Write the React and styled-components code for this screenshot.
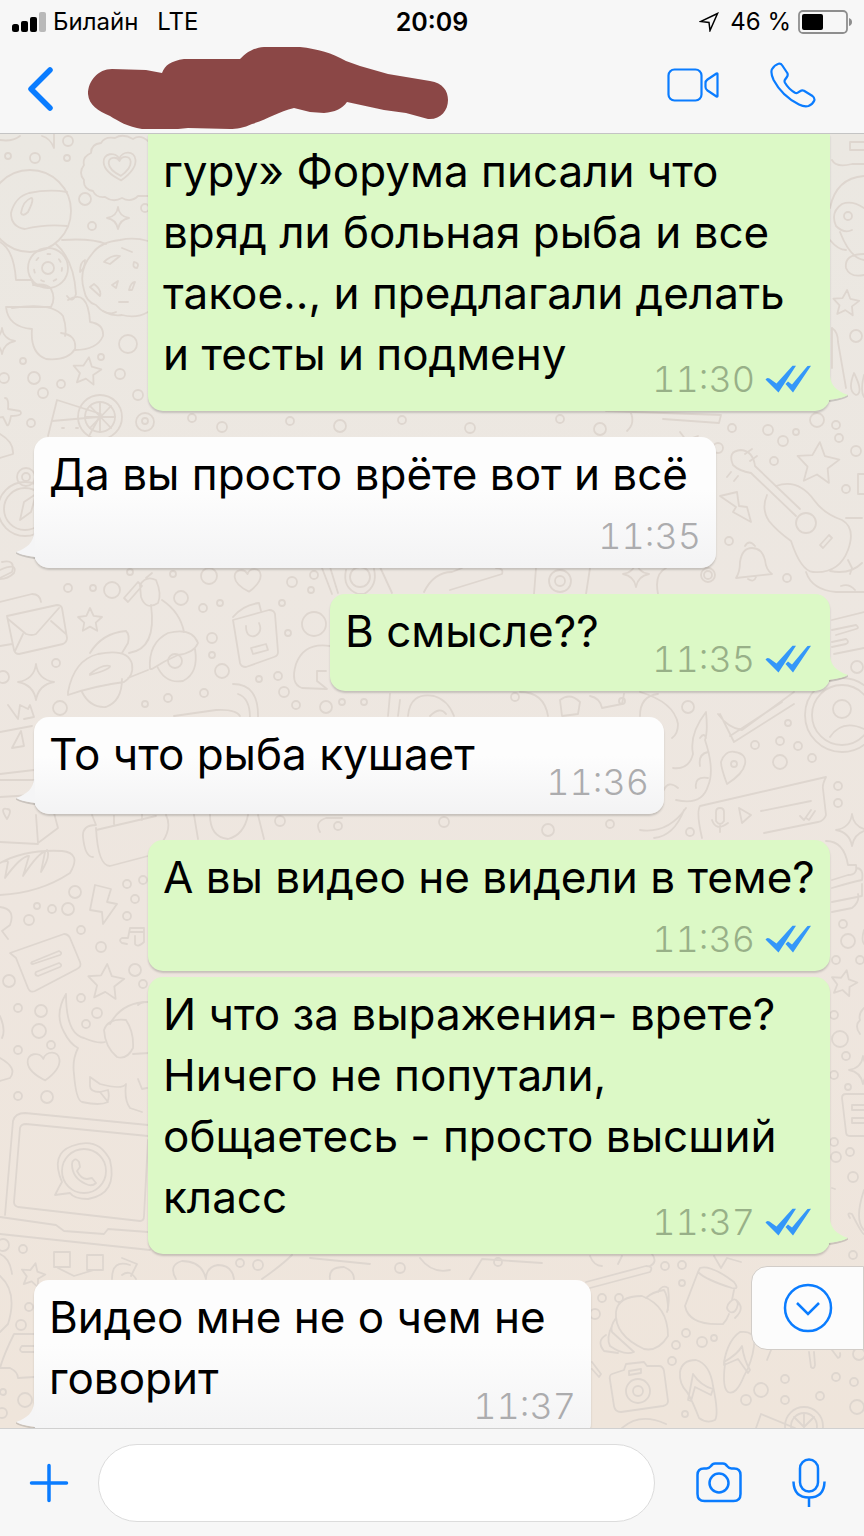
import React, { useState } from 'react';
import styled, { createGlobalStyle, css } from 'styled-components';

const GlobalStyle = createGlobalStyle`
    *, *::before, *::after {
        box-sizing: border-box;
    }

    body {
        margin: 0;
        color: #000;
        background: #f7f7f7;
        font-family: Inter, 'Noto Sans', sans-serif;
    }
`;

const blue = '#0a7cff';

const Screen = styled.div`
    display: flex;
    flex-direction: column;
    height: 100vh;
    overflow: hidden;
`;

const Header = styled.header`
    flex: none;
    background: #f7f7f7;
    border-bottom: 1px solid #c4c4c4;
`;

const StatusBar = styled.div`
    display: grid;
    grid-template-columns: 1fr auto 1fr;
    align-items: center;
    height: 44px;
    padding: 0 12px;
    font-size: 24px;
    line-height: 44px;
    white-space: nowrap;
`;

const StatusGroup = styled.div`
    display: flex;
    align-items: center;
    justify-content: ${({ $end }) => ($end ? 'flex-end' : 'flex-start')};
    gap: 7px;
`;

const Network = styled.span`
    margin-left: 12px;
`;

const LocationSvg = styled.svg`
    margin-right: 4px;
`;

const Clock = styled.time`
    font-size: 25px;
    font-weight: 600;
`;

const Nav = styled.nav`
    display: flex;
    align-items: center;
    height: 89px;
`;

const CallActions = styled.div`
    display: flex;
    padding: 0 21px 8px 0;
`;

const IconButton = styled.button`
    display: flex;
    flex: none;
    align-items: center;
    justify-content: center;
    width: ${({ $width }) => $width}px;
    height: 78px;
    padding: 0;
    color: ${blue};
    background: none;
    border: 0;
    cursor: pointer;

    svg {
        display: block;
        fill: none;
        stroke: currentColor;
        stroke-linecap: round;
        stroke-linejoin: round;
    }
`;

const Contact = styled.div`
    flex: 1;
    padding-left: 8px;

    svg {
        display: block;
    }
`;

const Chat = styled.main`
    position: relative;
    flex: 1;
    min-height: 0;
    overflow: hidden;
    background: linear-gradient(#ebe8e2, #ede7e1 35%, #eee6df 60%, #efe5db);
`;

const WallpaperSvg = styled.svg`
    position: absolute;
    inset: 0;
    width: 100%;
    height: 100%;
    fill: none;
    stroke: #ded6cf;
    stroke-width: 1.8;
    stroke-linecap: round;
    stroke-linejoin: round;
`;

const Messages = styled.ol`
    position: relative;
    display: flex;
    flex-direction: column;
    margin: 0;
    padding: 0 34px;
    list-style: none;
`;

const Bubble = styled.li`
    position: relative;
    flex: none;
    width: ${({ $width }) => $width}px;
    max-width: 100%;
    min-height: ${({ $tall }) => ($tall ? 158 : 97)}px;
    margin-top: ${({ $joined }) => ($joined ? 6 : 26)}px;
    padding: 7px 15px ${({ $stacked }) => ($stacked ? 63 : 26)}px;
    border-radius: 15px;
    box-shadow: 0 2px 2px rgba(0, 0, 0, 0.17);

    ${({ $out }) =>
        $out
            ? css`
                  align-self: flex-end;
                  background: #dcf9c6;
              `
            : css`
                  align-self: flex-start;
                  background: linear-gradient(#fdfdfd 40%, #f3f3f4);
              `}

    &:first-child {
        margin-top: 0;
        border-top-left-radius: 0;
        border-top-right-radius: 0;
    }
`;

const Text = styled.p`
    margin: 0;
    font-size: 44px;
    line-height: 61px;
`;

const Line = styled.span`
    display: block;
    width: fit-content;
`;

const Meta = styled.div`
    position: absolute;
    right: ${({ $out }) => ($out ? 19 : 15)}px;
    bottom: 10px;
    display: flex;
    align-items: center;
    gap: 10px;
    color: ${({ $out }) => ($out ? '#98b088' : '#acacae')};
    font-size: 36px;
    font-weight: 300;
    font-variant-numeric: tabular-nums;
    line-height: 44px;
`;

const TailSvg = styled.svg`
    position: absolute;
    bottom: 7px;
    ${({ $out }) =>
        $out
            ? css`
                  right: -18px;
                  fill: #dcf9c6;
              `
            : css`
                  left: -18px;
                  fill: #f5f5f6;
                  transform: scaleX(-1);
              `}
`;

const ScrollButton = styled.button`
    position: absolute;
    right: 0;
    bottom: 78px;
    display: flex;
    align-items: center;
    justify-content: center;
    width: 113px;
    height: 84px;
    padding: 0;
    color: ${blue};
    background: #fcfcfc;
    border: 1px solid #d2cdc8;
    border-radius: 16px 0 0 16px;
    cursor: pointer;
`;

const Composer = styled.form`
    display: flex;
    flex: none;
    align-items: center;
    padding: 15px 10px 14px 0;
    background: #f7f7f7;
    border-top: 1px solid #d0d0d0;
`;

const MessageInput = styled.input`
    flex: 1;
    min-width: 0;
    height: 78px;
    margin-right: 19px;
    padding: 0 32px;
    color: inherit;
    background: #fff;
    border: 1px solid #dcdcdc;
    border-radius: 39px;
    font: inherit;
    font-size: 36px;

    &:focus {
        outline: none;
    }
`;

const messages = [
    {
        out: true,
        tail: true,
        width: 682,
        time: '11:30',
        lines: [
            'гуру» Форума писали что',
            'вряд ли больная рыба и все',
            'такое.., и предлагали делать',
            'и тесты и подмену',
        ],
    },
    {
        tail: true,
        stacked: true,
        width: 682,
        time: '11:35',
        lines: ['Да вы просто врёте вот и всё'],
    },
    { out: true, tail: true, width: 500, time: '11:35', lines: ['В смысле??'] },
    { tail: true, width: 630, time: '11:36', lines: ['То что рыба кушает'] },
    {
        out: true,
        stacked: true,
        width: 682,
        time: '11:36',
        lines: ['А вы видео не видели в теме?'],
    },
    {
        out: true,
        tail: true,
        joined: true,
        width: 682,
        time: '11:37',
        lines: [
            'И что за выражения- врете?',
            'Ничего не попутали,',
            'общаетесь - просто высший',
            'класс',
        ],
    },
    {
        tail: true,
        tall: true,
        width: 557,
        time: '11:37',
        lines: ['Видео мне не о чем не', 'говорит'],
    },
];

// [cx, cy, r]
const dots = [
    [68, 141, 5], [35, 158, 5], [8, 156, 3], [67, 158, 3], [85, 199, 6], [92, 226, 4], [145, 208, 4],
    [128, 344, 9], [101, 357, 3], [23, 361, 3], [4, 378, 5], [34, 378, 6], [61, 384, 4], [43, 393, 5],
    [120, 374, 5], [138, 395, 5], [31, 423, 4], [145, 422, 9], [145, 421, 3],
    [192, 418, 4], [222, 427, 5], [290, 421, 4], [340, 426, 6], [402, 420, 4], [470, 428, 5],
    [560, 419, 4], [600, 429, 6], [732, 428, 4], [768, 430, 5], [783, 441, 5], [796, 432, 3], [817, 420, 7],
    [836, 425, 4], [839, 438, 4], [856, 451, 5], [774, 461, 4], [846, 489, 4], [718, 448, 5], [729, 541, 4],
    [787, 578, 4], [708, 575, 7], [708, 575, 4],
    [68, 588, 4], [93, 588, 3], [112, 590, 8], [130, 572, 3], [173, 574, 3], [209, 576, 8], [181, 598, 7],
    [203, 608, 4], [220, 603, 3], [282, 603, 3], [292, 582, 5], [311, 590, 3], [314, 575, 4], [212, 638, 5],
    [212, 655, 3], [222, 671, 7], [288, 633, 3], [259, 679, 3], [278, 676, 4], [284, 692, 5], [296, 705, 4],
    [326, 707, 6], [342, 702, 3], [364, 702, 3], [56, 663, 4], [3, 677, 6], [60, 708, 7], [145, 704, 3],
    [168, 698, 4], [204, 693, 4], [515, 697, 4], [622, 701, 3], [688, 707, 6], [560, 581, 11], [560, 581, 5],
    [788, 723, 3], [755, 745, 4], [780, 741, 4], [798, 746, 4], [780, 762, 7], [812, 758, 4],
    [838, 786, 4], [838, 803, 4], [857, 667, 6], [842, 709, 9],
    [280, 821, 5], [338, 826, 4], [444, 822, 5], [548, 830, 6], [610, 824, 4], [690, 832, 4],
    [75, 892, 6], [68, 909, 6], [52, 909, 4], [37, 906, 3], [29, 920, 5], [81, 930, 4], [101, 947, 5],
    [127, 884, 4], [143, 880, 4], [135, 899, 4], [127, 916, 4], [135, 970, 6], [143, 984, 4], [9, 981, 6],
    [18, 1008, 4], [41, 1011, 6], [39, 1031, 7], [51, 1045, 4], [18, 1050, 4], [81, 998, 4], [97, 1013, 5],
    [86, 1024, 4], [18, 1096, 4], [47, 1097, 6],
    [843, 924, 4], [848, 941, 7], [836, 960, 4], [860, 960, 4], [834, 1015, 4], [840, 1039, 8], [846, 1056, 4],
    [834, 1075, 4], [848, 1087, 3], [834, 1142, 4], [836, 1157, 5], [850, 1152, 4], [853, 1177, 5],
    [853, 1255, 4],
    [3, 1245, 6], [23, 1249, 4], [21, 1325, 5], [29, 1307, 4], [25, 1400, 7], [3, 1392, 3], [2, 1413, 5],
    [240, 1263, 4], [258, 1265, 5], [400, 1268, 5], [498, 1262, 4], [602, 1298, 4], [619, 1298, 4],
    [595, 1314, 5], [665, 1266, 4], [682, 1265, 4], [682, 1283, 3], [676, 1345, 4], [686, 1333, 4],
    [702, 1342, 5], [714, 1338, 3], [672, 1361, 4], [761, 1390, 7], [746, 1400, 5], [785, 1379, 4],
    [785, 1400, 4], [820, 1396, 4], [836, 1377, 4], [854, 1382, 4], [857, 1407, 7], [685, 1414, 3],
    [859, 1354, 6],
];

// [x, y, scale, rotation]
const stars = [
    [87, 371, 14, 8], [818, 463, 21, 5], [846, 303, 13, 5], [90, 620, 12, 0], [106, 982, 18, 4],
    [844, 983, 13, 12], [33, 1275, 12, 12],
];
const sparkles = [
    [118, 218, 11], [2, 341, 13], [36, 682, 18], [673, 634, 14], [636, 574, 13], [852, 830, 16], [863, 1070, 14],
];
const hearts = [
    [120, 166, 16], [120, 166, 11], [248, 580, 13], [44, 1066, 16],
];

function Wallpaper() {
    return (
        <WallpaperSvg
            viewBox="0 134 864 1294"
            preserveAspectRatio="xMidYMin slice"
            aria-hidden="true"
        >
            {dots.map(([cx, cy, r], i) => (
                <circle key={i} cx={cx} cy={cy} r={r} />
            ))}
            {stars.map(([x, y, s, r], i) => (
                <path
                    key={i}
                    vectorEffect="non-scaling-stroke"
                    transform={`translate(${x} ${y}) rotate(${r}) scale(${s})`}
                    d="M0-1L.3-.35L1-.25L.48.22L.6.9L0 .55L-.6.9L-.48.22L-1-.25L-.3-.35Z"
                />
            ))}
            {sparkles.map(([x, y, s], i) => (
                <path
                    key={i}
                    vectorEffect="non-scaling-stroke"
                    transform={`translate(${x} ${y}) scale(${s})`}
                    d="M0-1Q.1-.15 1 0Q.15.15 0 1Q-.15.15-1 0Q-.1-.15 0-1Z"
                />
            ))}
            {hearts.map(([x, y, s], i) => (
                <path
                    key={i}
                    vectorEffect="non-scaling-stroke"
                    transform={`translate(${x} ${y}) rotate(-5) scale(${s})`}
                    d="M0 .9C-.5.6-1 .2-1-.3C-1-.9-.2-.95 0-.45C.2-.95 1-.9 1-.3C1 .2.5.6 0 .9Z"
                />
            ))}

            {/* scalloped badge, biscuit */}
            <path d="M148 141q-8-7-15-2q-10-6-18-1q-10-2-14 5q-10 1-10 10q-9 4-7 12q-6 8 0 15q-1 9 9 11q3 7 12 6q8 6 17 1q9 5 16-2l10 0" />
            <path d="M148 241q-14-4-28-1q-20 2-28 14q-14 16-8 36q2 12 12 15q10 12 26 10q14 4 26-3" />
            <path d="M104 262q8-8 16-6l-10 8ZM90 287l10 9q2-6-6-12ZM112 285l6-4-2 7ZM134 262q6 1 3 6q-5 0-3-6ZM129 290q2-8 6-8l-3 8ZM119 302h9M122 248l10 4M80 272q0-10 5-12q0 8-5 12ZM103 311q8 4 13 1" />

            {/* astronaut */}
            <circle cx="30" cy="211" r="41" />
            <path d="M67 192q-18-3-38 1q-14 4-18 20q0 14 14 16q20-5 42-3M31 198q4 0-3 14q-5 5-7 1q2-12 10-15Z" />
            <path d="M62 240q30-2 44 4M56 244q18 16 20 50q-3 10-9 2M0 242q14 8 16 38h16q0 8 14 6M6 307h45q5-9 0-18q-4-6-18-4M6 307q2 20 26 22M12 308q40-6 51 8q4 12 2 20M32 329q-2 24 14 30q22 2 29-10q2-14-14-16M68 300q20-12 22 22q14 2 13 14q-6 14-28 14" />
            <circle cx="48" cy="268" r="20" />
            <circle cx="48" cy="268" r="6" />
            <circle cx="48" cy="268" r="14" strokeDasharray="3 10" />
            <path d="M0 140q12 2 20-4M42 136q8 2 12 12v-14" />

            {/* lemonade */}
            <path d="M48 436l9-36 44 14-12 22M52 421l46-4M62 428h2M76 428h2" />
            <circle cx="100" cy="417" r="22" />
            <circle cx="100" cy="417" r="15" />
            <path d="M100 402v30M85 417h30M90 406l21 22M111 406l-21 22" />

            {/* cross, compass */}
            <path d="M5 398q4 0 3 11l12 2q4 5-9 5q-2 11-4 9l-4-8-8 1" />
            <path d="M0 434q14 8 13 20l-13 4" />
            <circle cx="25" cy="509" r="27" />
            <circle cx="25" cy="509" r="21" />
            <circle cx="26" cy="477" r="9" />
            <circle cx="26" cy="477" r="4" />
            <path d="M20 520l4-18 12-8-5 18Z" />
            <path d="M0 570q18-8 14 3q-6 6-14 6" />

            {/* shapes behind the right edge */}
            <path d="M832 160q4 8 20 4h12M850 142h14M850 142v8h14M864 176q-28 2-34 32M864 208q-12-8-22-4q-12 8-6 22q8 8 16 4M840 232q10 26 24 28M830 240q8 10 16 10M864 254q-20 0-18 14q4 10 18 7" />
            <circle cx="848" cy="216" r="4" />
            <path d="M832 328q6 4 6 14l8 46M832 328v40M854 373q10 20 2 22q-9-4-2-22ZM864 375q-4 16 0 22M864 474h-6v20h6" />
            <path d="M606 411l115 4-2 8-56-4M630 411q6 12-3 20M680 432l6 8 12-4" />
            <circle cx="856" cy="336" r="6" />

            {/* bolt, bell */}
            <path d="M720 496l17-4 2 14 8 1 4 15-18-10 3-5Z" />
            <path d="M736 578q4-6 4-16q2-14 12-14q10 0 13 12q1 10 7 14ZM745 546q4-7 10 0M748 579q6 4 8-2" />

            {/* guitar */}
            <path d="M733 465q-6-14 8-15q12 1 14 16l45 43M733 465q6 6 18 8l45 43" />
            <path d="M767 495q-6 14 2 26q8 10 22 20q10 30 22 31q26 2 35-22q8-22-6-30q-18-6-28-20q-16-22-38-14" />
            <circle cx="806" cy="523" r="10" />
            <path d="M820 545l9-10 3 3-9 10ZM745 454l7-5M750 461l7-5M731 472l-4 5M738 476l-4 5M830 571q20 4 32-8M848 560l4 8-2 6M806 572q6 18 30 20h28M841 586q8-3 14 4M862 518h-16" />

            {/* envelope */}
            <path d="M7 616l50-11q4 0 5 3l5 30q0 4-4 6l-44 10q-4 0-5-4ZM8 619l18 15q6 2 10 0l23-26M15 651l8-17M66 634l-15-13M0 602l32-8q8 0 9 8M0 646l12-2M2 562q14-3 10 10l-12 6" />

            {/* scooter */}
            <path d="M124 598l14-16 4 4-14 16ZM140 585q6-10 16-5q6 14 2 23q-12 8-17-6ZM146 578l6-5M151 605q6 44-22 48M162 600q18 12 22 32M90 653q12-20 36-22q4 4 2 12l-6 10" />
            <path d="M68 692q6-32 30-38q30-6 34 10q2 12-8 18q-30 4-56 13ZM90 674q12-10 20-8q1 3-20 9ZM82 692q8 16 24 15q16-6 16-28M150 669q-2-26 18-36q24-6 30 10q-4 10-20 12q-14 6-26 14ZM157 666q8 18 26 15q16-8 12-32M128 678l20-8" />
            <circle cx="175" cy="661" r="7" />

            {/* passport */}
            <path d="M233 620l36-10q5 0 6 4l3 38q0 4-4 5l-28 10q-5 0-6-4ZM233 617q10-12 26-14l2 8M246 626q0 12 9 10q8-4 4-13M251 648l15-4 2 6-15 4Z" />

            {/* phone and crab behind bubbles */}
            <path d="M322 568l10 26M330 567l8 26M380 567l12 26M346 570q-4 18 12 24h6q14-8 10-25" />
            <circle cx="360" cy="577" r="10" />
            <path d="M424 592q10-20 28-20l10-4M450 590l52-16q2-6-6-6M536 568l-2 26M590 568l-4 26M658 594q-4-20 8-26" />
            <circle cx="314" cy="624" r="12" />
            <path d="M330 646q-26-4-34 18q-6 20 6 24l24 1M326 671h-9v10l10 8" />

            {/* tambourine, tag, ribbon */}
            <path d="M174 716l42-6q20-1 24 6M233 684q26 0 25 34M238 694q12 4 12 24M390 694l-2 22M400 700l-2 16M408 716q2-24 26-20q14 4 20 20M430 716q10-10 16-2M520 692q24 0 28 24M560 700q10-8 20 2l-2 12-16 2ZM590 696q10 2 12 12l20-4 2-10M640 716q0-20 18-22" />
            <path d="M640 692q34 10 38 32q0 10-6 14M718 714q10 14 24 16l52-38M720 714l14 28 60-38M730 736l52-34M673 768q16 2 20-14q-4-20 13-42q2 20-1 28q10 30 3 46q-6 20-32 14M708 752q-10 2-8 14M696 788q-2-12 12-10M664 790q4-10 14-2M700 738q4-6 6 0" />
            <path d="M727 784q-6-16-6-22q4-12 14-10q12 2 10 12q-2 10-18 20Z" />
            <circle cx="734" cy="764" r="3" />
            <circle cx="842" cy="715" r="37" />
            <circle cx="842" cy="715" r="30" />
            <path d="M830 737q12-18 34-8M832 620l32-8M832 630l24-5q4 3 0 4l-20 6M832 642l14-3q4 3 0 5l-14 3M834 654l30-6" />

            {/* voice message card */}
            <path d="M702 838q-6-26-2-32l126-29q-4 8-3 12l3 26q-2 6-8 7l-54 11M716 812q0-4 4-4q4 0 4 4v9q-4 6-8 0ZM712 820q4 12 16 3M720 826v6M739 808l12 7-9 8ZM761 811l50-10M800 816l4 4 7-10M806 818l3 2 6-9M640 830q28 4 46-22M654 838q20-2 30-28" />

            {/* paper plane, blinds, carton */}
            <path d="M8 705l10 14 2-14 8 4 2-4 4 12-10 2M0 732l32-6M12 748l9-17 3 15ZM0 774l34-4M0 780h34M0 797l34-2M0 842l38 2M36 815l2 28 20-15-4-15M7 819q-8-12 0-10q6 0 0 10Z" />
            <path d="M92 815l4 10q-14 0-13 12q2 20 10 20M96 828q2 38 14 38l38-10M96 830l60-14M114 824v-8M142 820v-6M166 815q6 12-3 26M194 815l4 24M210 815q0 22 18 24q16-4 20-24M258 815l6 24M320 832q-6-10 6-14h16" />

            {/* baguette */}
            <path d="M0 895q40-2 70-22q12-20-8-22q-36-2-62 12M2 862q6-2 6 0l-3 16q16-22 24-22l-6 20q16-24 22-24l-4 20q10-16 6-22" />
            <path d="M0 907q16 2 10 18l-8 6 6 8" />

            {/* bolt, note, speech card */}
            <path d="M95 885l16 4-4 13 10 2-14 20-1-12-12-2ZM127 944l-5-1q-4-3 0-5h6l2-10h14v14q-6 6-9 2v-8M130 932h14" />
            <path d="M10 953l54-19q4 0 6 4l10 24q2 5-3 7l-42 22q-5 2-7-3l-12-30ZM32 962l27-11q4 2 1 4l-27 9q-3 0-1-2ZM36 972l23-9q4 2 1 4l-22 9q-4-1-2-4Z" />

            {/* elephant */}
            <path d="M66 994q-12 20-2 38q6 12 14 16q-6 12-4 26q2 26 8 28q18 4 26 0l-8-10q-10 0-10-6v-9l10 7q22 6 26 0q-2 16 4 24l12 4M66 994q0 40 18 44q14 6 21 4M148 1002q-26 0-38 22M100 1092l8-2q2 8-1 12M138 1079l4 10 5-1" />
            <path d="M104 1030q4-12 22-10q8 12 7 28q-6 12-16 9q-12-10-13-27ZM133 1054l16-1M138 1005q4-4 12-3" />
            <path d="M0 1016q6 14 2 22M0 1058q18 10 10 20l-10 3" />

            {/* laptop */}
            <path d="M5 1215l8-94q2-8 12-8l123 12M148 1136l-122-12q-5 0-6 4l-6 74q0 4 4 5l122 14q4 0 4-5l4-76M0 1217l56 8 8 6 40 3 4-5 40 3M0 1234l150 16" />
            <circle cx="84" cy="1171" r="22" />
            <path d="M62 1182q-12-28 10-36q26-10 38 14q8 34-22 39q-14 0-18-6l-15 2q4-8 7-13Z" />
            <path d="M74 1160q2-2 5 2l1 5-3 4q4 8 10 8l5-1 4 5q-4 4-10 1q-14-6-14-20q0-3 2-4Z" />
            <path d="M54 1252h16v15H54ZM87 1255h16v15H87ZM58 1268l16 8 20-6M122 1258l15 6-6 12M112 1279q0-20 18-14M136 1279q-6-10-14-4" />
            <path d="M0 1276q18 16 8 48l-8 8M34 1334H14q-10 20-14 34h10q8 4 8 10l16-1M34 1346H22q-4 4 0 6h12M0 1254q10 4 12 20" />

            {/* edge of the right column */}
            <path d="M826 841q18 0 22 24h8q2 10-8 10l-16 5M832 888q20-6 30-8q2-12-6-12M832 902q20-4 30-6v-12M832 912l20-4q8-6 6-14M864 930q-3 10 0 14M864 1008q-6 6-4 12q-6 6 0 14M864 1094h-18q-4 0-4 4l4 34q0 4 4 4h14M864 1105h-12v5h12M864 1118h-12v5h12M864 1190q-10 30 0 40M850 1218q-4-6 2-4q10 20 12 20M832 1188l3 1" />

            {/* fragments above the last bubble */}
            <path d="M176 1279q-8-14 6-18q20 0 24 18q0-12 12-14q14 0 16 14M262 1279q20-14 30-24M310 1258l60 6M330 1279q-2-12 14-12q10 4 10 12M420 1258q12 16 30 12M470 1279l12-20 60 4M590 1288l60-16q4-6-4-6l-60 16M590 1256q4 10 12 10M622 1256l-4 8M652 1254q6 8-2 12M714 1256l7 12 6-10 14 4" />

            {/* croissant, mug */}
            <path d="M616 1312q2-16 26-16q26 10 26 40q-10 16-24 13q-30-14-28-37ZM616 1318q-6 8-4 14l22 20q-10 4-24-6q-4-8 2-20M606 1335q-10 6-2 16l14 2M646 1298q6-6 18-8q4 6 4 20M658 1292q4-8 10-4q2 14-1 24" />
            <path d="M700 1268q10-4 34 14q6 8-2 6q-26-8-34-16ZM698 1272l-13 34q4 20 38 18q4-4 6-10M734 1290l-2 10M730 1302q6-6 8 2q-2 10-8 8q-6-4 0-10ZM736 1300q10 8-1 18" />

            {/* camera, flip-flops */}
            <path d="M612 1374l12-4 2-6 18-2 3 4 12 0q4 0 5 5l4 30q0 4-5 5l-42 6q-6 0-7-6l-4-26q-1-5 2-6ZM629 1371l12-2v4l-12 2Z" />
            <circle cx="638" cy="1391" r="12" />
            <circle cx="638" cy="1391" r="5" />
            <path d="M680 1372q2-12 16-12q14 4 17 26q6 28 2 34q-8 4-16-2q-6-16-12-26q-8-8-7-20ZM688 1400q4-20 5-26q8 12 20 15l-2 6-16-8-4 14ZM724 1362q4-22 16-30q16-2 14 14q-2 16-10 30q-8 20-16 16q-6-4-3-28ZM724 1362q14-8 18-16q2 14 8 24l-2 3-10-14-14 6Z" />
            <path d="M592 1362l9 12-2 3-7-8M622 1428q18-16 44-4M756 1428l5-14 34 14" />
            <circle cx="804" cy="1426" r="19" />
            <circle cx="804" cy="1426" r="13" />
            <path d="M804 1414v14M794 1417l10 10 10-10M767 1360l4-10M809 1352l2 15q3 3 4-2l-1-13M832 1350l6 8q3-1 2-5" />
        </WallpaperSvg>
    );
}

function Tail({ out }) {
    return (
        <TailSvg $out={out} width="24" height="28" aria-hidden="true">
            <path
                d="M5 25C11 24 19 23 24 19.500"
                fill="none"
                stroke="#000"
                strokeOpacity=".15"
                strokeWidth="2"
            />
            <path d="M5 0H6C7 9 12 15 24 19C19 22 11 23 5 24Z" />
        </TailSvg>
    );
}

function Checks() {
    return (
        <svg width="46" height="28" viewBox="0 0 46 28" fill="#3497f9" role="img" aria-label="Прочитано">
            <path d="M.5 14.500Q2 12 4.500 13.500L11.500 18.500L27.500 .8H31L13.500 27.500Z" />
            <path d="M20.500 19L23 16.500L27 19.500L42.500 1L46 .8L28 27.500Z" />
        </svg>
    );
}

function Message({ out, tail, stacked, joined, tall, width, time, lines }) {
    return (
        <Bubble
            $out={out}
            $stacked={stacked}
            $joined={joined}
            $tall={tall}
            $width={width}
        >
            {tail && <Tail out={out} />}
            <Text>
                {lines.map(line => (
                    <Line key={line}>{line}</Line>
                ))}
            </Text>
            <Meta $out={out}>
                <time>{time}</time>
                {out && <Checks />}
            </Meta>
        </Bubble>
    );
}

export default function App() {
    const [draft, setDraft] = useState('');

    return (
        <Screen>
            <GlobalStyle />

            <Header>
                <StatusBar>
                    <StatusGroup>
                        <svg width="34" height="22" aria-hidden="true">
                            <rect x="0" y="13" width="7" height="8" rx="2.500" />
                            <rect x="9" y="10" width="7" height="11" rx="2" />
                            <rect x="18" y="6" width="7" height="15" rx="2" />
                            <rect x="27" y="1" width="7" height="20" rx="2" fill="#b9b9b9" />
                        </svg>
                        <span>Билайн</span>
                        <Network>LTE</Network>
                    </StatusGroup>
                    <Clock>20:09</Clock>
                    <StatusGroup $end>
                        <LocationSvg width="20" height="20" viewBox="0 0 20 20" aria-hidden="true">
                            <path
                                d="M18.500 1.500L1.500 9.500L10 10.500L11 18.500Z"
                                fill="none"
                                stroke="#000"
                                strokeWidth="1.500"
                            />
                        </LocationSvg>
                        <span>46 %</span>
                        <svg width="54" height="24" viewBox="0 0 54 24" aria-hidden="true">
                            <rect
                                x="1"
                                y="1"
                                width="48"
                                height="22"
                                rx="4"
                                fill="none"
                                stroke="#8e8e8e"
                                strokeWidth="1.800"
                            />
                            <rect x="4" y="4" width="21" height="16" rx="2" />
                            <path d="M51 8Q54 9 54 12Q54 15 51 16Z" fill="#8e8e8e" />
                        </svg>
                    </StatusGroup>
                </StatusBar>

                <Nav>
                    <IconButton $width={80} type="button" aria-label="Назад">
                        <svg width="26" height="44" viewBox="0 0 26 44">
                            <path d="M23 3L4 22L23 41" strokeWidth="5.500" />
                        </svg>
                    </IconButton>
                    <Contact>
                        <svg width="361" height="83" viewBox="0 0 361 83" aria-hidden="true">
                            <path
                                fill="#8b4746"
                                d="M0 47C0 34 10 22 24 22L58 23L74 26C77 18 83 14 96 12L152 12C158 6 164 1 176 0L212 0C230 2 244 6 258 14L272 19L300 27L342 34C355 36 360 44 360 53C360 64 352 73 340 72L318 66L296 63L259 55C254 62 247 65 236 66L222 65L206 61C190 65 180 72 164 77C156 81 148 82 142 82L100 81L90 82L54 82C40 80 30 74 22 69C10 64 1 58 0 47Z"
                            />
                        </svg>
                    </Contact>
                    <CallActions>
                        <IconButton $width={100} type="button" aria-label="Видеозвонок">
                            <svg width="52" height="34" viewBox="0 0 52 34">
                                <rect x="1.500" y="1.500" width="33" height="31" rx="6" strokeWidth="2.200" />
                                <path
                                    strokeWidth="2.200"
                                    d="M50.500 6V28Q50.500 29 49.500 28.500L40.500 22.500Q38.500 21 38.500 19V15Q38.500 13 40.500 11.500L49.500 5.500Q50.500 5 50.500 6Z"
                                />
                            </svg>
                        </IconButton>
                        <IconButton $width={100} type="button" aria-label="Позвонить">
                            <svg width="46" height="46" viewBox="0 0 46 46">
                                <path
                                    strokeWidth="2.200"
                                    d="M8.500 1.800Q10.800 1.200 12.300 3.500L17.300 11Q18.300 13 16.900 15L14.800 18Q14.200 19.300 15 20.800Q18.500 27 25 30.800Q26.500 31.500 27.800 30.600L30 29.200Q32 28 34 28.800L42.500 34Q45 36 44.300 38.500Q42.500 42.500 38.500 44Q34.500 45.200 29 42.500Q12 34 3.600 18Q.5 11.500 1.800 7.500Q4.500 3 8.500 1.800Z"
                                />
                            </svg>
                        </IconButton>
                    </CallActions>
                </Nav>
            </Header>

            <Chat>
                <Wallpaper />
                <Messages>
                    {messages.map((message, i) => (
                        <Message key={i} {...message} />
                    ))}
                </Messages>
                <ScrollButton type="button" aria-label="К последним сообщениям">
                    <svg
                        width="50"
                        height="50"
                        viewBox="0 0 50 50"
                        fill="none"
                        stroke="currentColor"
                        strokeWidth="2.500"
                    >
                        <circle cx="25" cy="25" r="23" />
                        <path d="M14 20L25 31L36 20" />
                    </svg>
                </ScrollButton>
            </Chat>

            <Composer onSubmit={e => e.preventDefault()}>
                <IconButton $width={98} type="button" aria-label="Прикрепить">
                    <svg width="40" height="40" viewBox="0 0 40 40">
                        <path d="M20 2.500V37.500M2.500 20H37.500" strokeWidth="3.500" />
                    </svg>
                </IconButton>
                <MessageInput
                    aria-label="Сообщение"
                    value={draft}
                    onChange={e => setDraft(e.target.value)}
                />
                <IconButton $width={90} type="button" aria-label="Камера">
                    <svg width="46" height="42" viewBox="0 0 46 42">
                        <path
                            strokeWidth="2.500"
                            d="M8 6.500H10.500Q13 6.500 15 4Q16.500 1.500 19 1.500H27Q29.500 1.500 31 4Q33 6.500 35.500 6.500H38Q44.500 6.500 44.500 13V32Q44.500 39 37.500 39H8.500Q1.500 39 1.500 32V13Q1.500 6.500 8 6.500Z"
                        />
                        <circle cx="23" cy="21" r="9.500" strokeWidth="2.500" />
                    </svg>
                </IconButton>
                <IconButton $width={90} type="button" aria-label="Голосовое сообщение">
                    <svg width="34" height="50" viewBox="0 0 34 50">
                        <rect x="8" y="1.500" width="18" height="32" rx="9" strokeWidth="2.500" />
                        <path
                            d="M1.500 23.500V24Q2 39.500 17 39.500Q32 39.500 32.500 24V23.500M17 39.500V49"
                            strokeWidth="2.500"
                            strokeLinecap="butt"
                        />
                    </svg>
                </IconButton>
            </Composer>
        </Screen>
    );
}
